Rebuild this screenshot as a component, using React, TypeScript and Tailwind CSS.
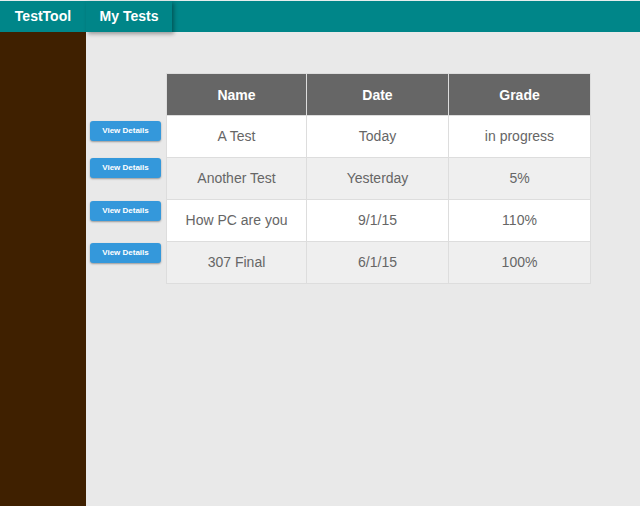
const rows = [
  { name: "A Test", date: "Today", grade: "in progress" },
  { name: "Another Test", date: "Yesterday", grade: "5%" },
  { name: "How PC are you", date: "9/1/15", grade: "110%" },
  { name: "307 Final", date: "6/1/15", grade: "100%" },
];

const btnOffsets = ["mt-[89px]", "mt-[17px]", "mt-[23px]", "mt-[22px]"];

export default function App() {
  return (
    <div
      className="flex flex-col h-[506px] w-[640px] overflow-hidden bg-[#e9e9e9]"
      style={{ fontFamily: '"Liberation Sans", Arial, sans-serif' }}
    >
      <div className="h-px bg-[#e6eeee]" />
      <nav className="flex h-[31px] bg-[#008689] text-white text-[14px] font-bold z-10">
        <div className="w-[86px] flex items-center justify-center">TestTool</div>
        <div className="w-[86px] flex items-center justify-center bg-[#008588] shadow-[2px_2px_4px_rgba(0,0,0,0.35)]">
          My Tests
        </div>
      </nav>
      <div className="flex flex-1">
        <aside className="w-[86px] bg-[#3f2000]" />
        <main className="flex flex-1">
          <div className="flex flex-col w-[80px] shrink-0 pl-[4px]">
            {btnOffsets.map((m, i) => (
              <button
                key={i}
                className={`${m} w-[71px] h-[20px] rounded-[3px] bg-[#3498db] text-white text-[8px] font-bold shadow-[0_1px_2px_rgba(0,0,0,0.35)]`}
              >
                View Details
              </button>
            ))}
          </div>
          <div className="pt-[41px]">
            <table className="border-separate border-spacing-0 text-[14px] text-[#666] border-l border-t border-[#ddd]">
              <thead>
                <tr className="bg-[#666] text-white">
                  <th className="w-[140px] h-[42px] pt-[2px] font-bold border-r border-b border-[#ddd]">Name</th>
                  <th className="w-[142px] h-[42px] pt-[2px] font-bold border-r border-b border-[#ddd]">Date</th>
                  <th className="w-[142px] h-[42px] pt-[2px] font-bold border-r border-b border-[#ddd]">Grade</th>
                </tr>
              </thead>
              <tbody>
                {rows.map((r, i) => (
                  <tr key={i} className={i % 2 === 0 ? "bg-white" : "bg-[#efefef]"}>
                    <td className="h-[42px] text-center border-r border-b border-[#ddd]">{r.name}</td>
                    <td className="h-[42px] text-center border-r border-b border-[#ddd]">{r.date}</td>
                    <td className="h-[42px] text-center border-r border-b border-[#ddd]">{r.grade}</td>
                  </tr>
                ))}
              </tbody>
            </table>
          </div>
        </main>
      </div>
    </div>
  );
}
